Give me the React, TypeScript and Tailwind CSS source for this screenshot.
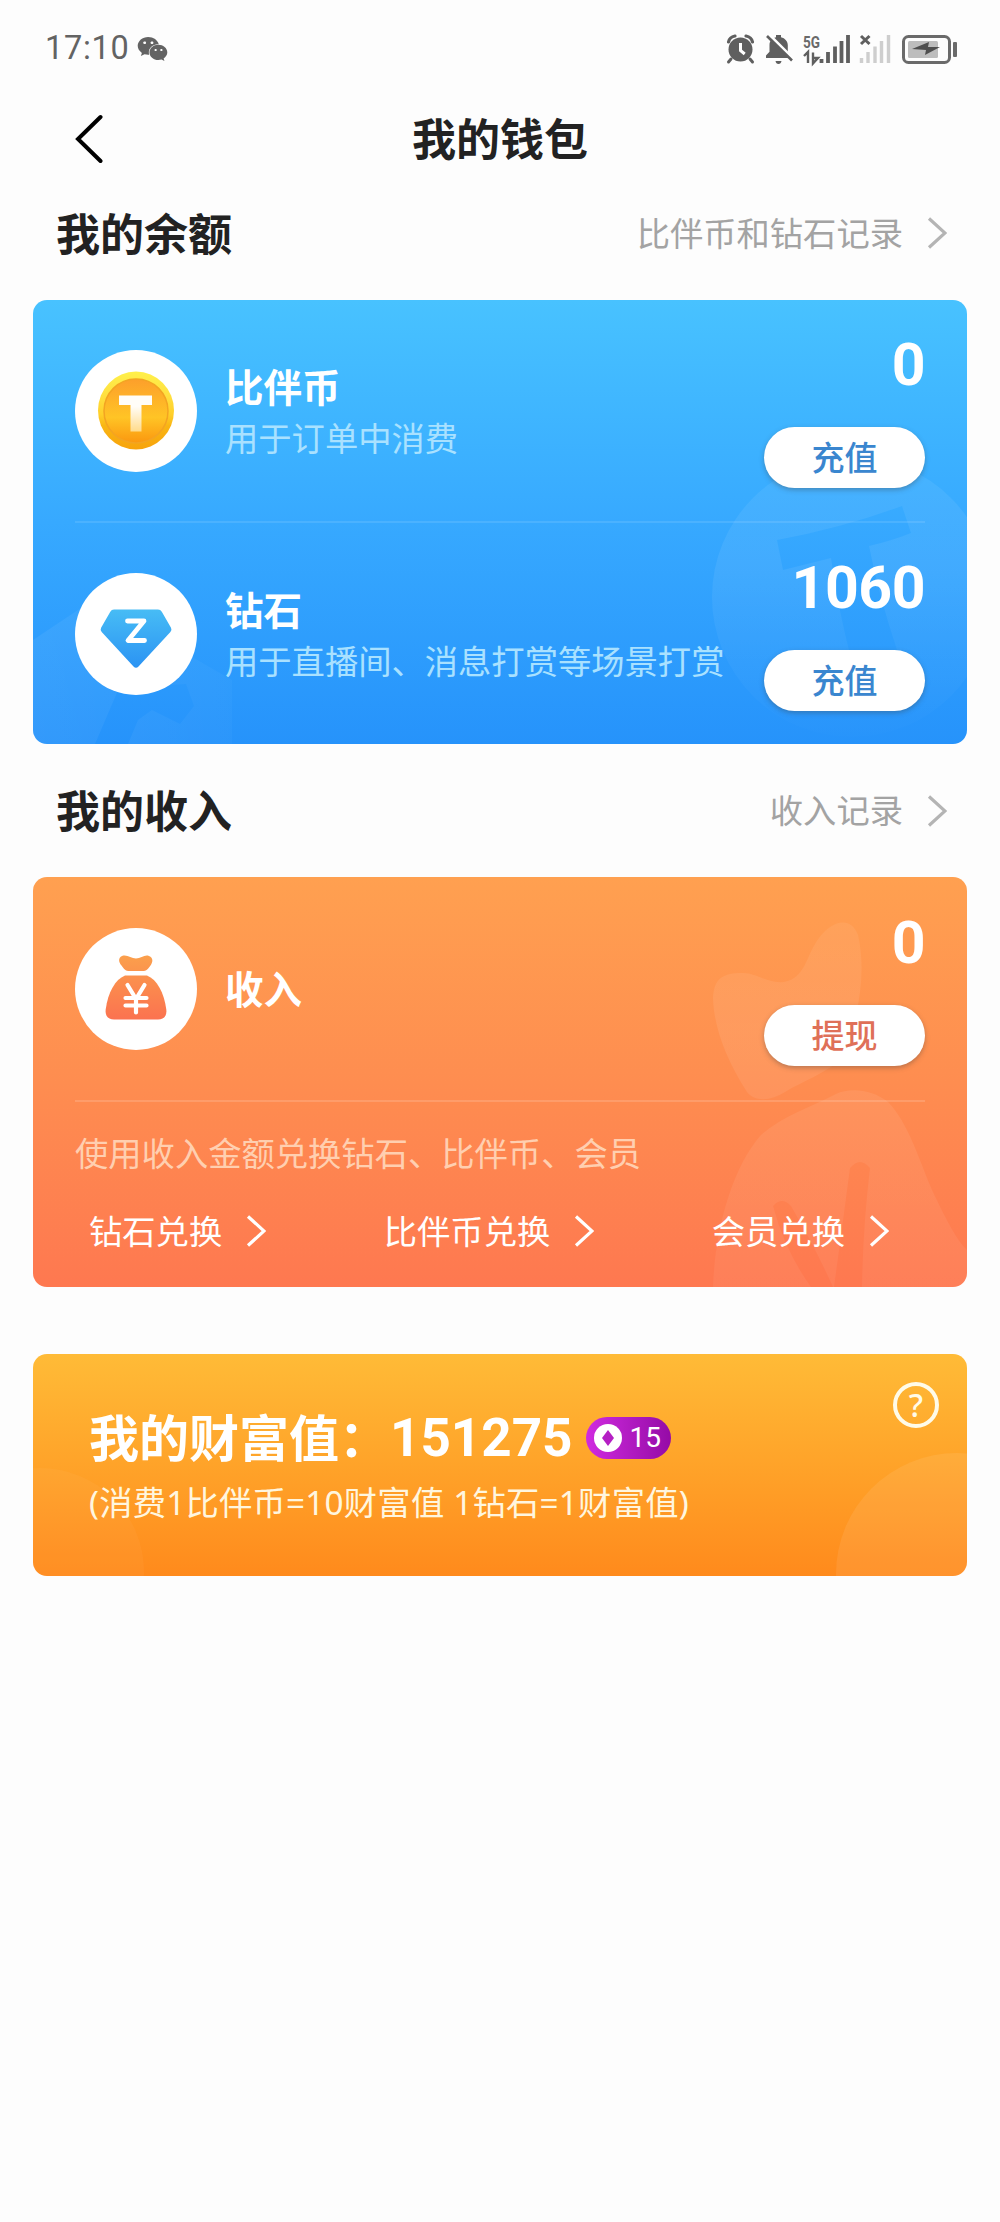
import React from "react";
import { FaWeixin } from "react-icons/fa";

function Chevron({ className }: { className: string }) {
  return (
    <svg viewBox="0 0 20 32" className={`h-8 w-5 ${className}`} fill="none" stroke="currentColor" strokeWidth="3.2">
      <path d="M2 1.500 18 16 2 30.500" />
    </svg>
  );
}

function StatusBar() {
  return (
    <div className="flex h-[97px] items-center justify-between pl-[45px] pr-[42px] text-[#636363]">
      <div className="flex items-center gap-[8px]">
        <span className="font-['Roboto',sans-serif] text-[32.500px] leading-none tracking-[0.7px]">17:10</span>
        <FaWeixin className="h-[28px] w-[31px]" />
      </div>
      <svg width="232" height="36" viewBox="726 30 232 36" className="block overflow-visible">
        {/* alarm */}
        <g fill="#5f5f5f">
          <circle cx="740.5" cy="48.500" r="12" />
          <path d="M728.500 41q1-5 6.500-6" fill="none" stroke="#5f5f5f" strokeWidth="3.200" strokeLinecap="round" />
          <path d="M752.500 41q-1-5-6.500-6" fill="none" stroke="#5f5f5f" strokeWidth="3.200" strokeLinecap="round" />
          <path d="m731 58-2.500 3M750 58l2.500 3" stroke="#5f5f5f" strokeWidth="3" strokeLinecap="round" />
          <path d="M740.500 42v7.500l4.200 3.500" fill="none" stroke="#fff" strokeWidth="3" />
        </g>
        {/* muted bell */}
        <path
          d="M766 57v-2.500l3.500-3.800V44c0-4 2.500-6.800 6.500-7.800V34h5v2.200c4 1 6.800 4 6.800 8v6.500L791 54.500V57ZM775.500 60h6q-.5 3-3 3t-3-3Z"
          fill="#5f5f5f"
        />
        <path d="m769 33.500 25 25" stroke="#fff" strokeWidth="3" />
        <path d="m767 35 25 24.500" stroke="#5f5f5f" strokeWidth="2.600" />
        {/* mobile signal */}
        <text x="803" y="46.500" fontSize="17" fontWeight="700" fontFamily="Roboto" textLength="17" lengthAdjust="spacingAndGlyphs" fill="#6a6a6a">
          5G
        </text>
        <path d="M804 55l4-4v11M813 51.500v11l5-5.500h-5" fill="none" stroke="#5f5f5f" strokeWidth="2.400" />
        <path d="M821.500 62v-4M828 62V51M835 62V45.500M841.500 62V40M848 62V34" stroke="#5f5f5f" strokeWidth="3.800" />
        {/* empty sim */}
        <path d="m861 35 8.500 8M869.500 35l-8.500 8" stroke="#5f5f5f" strokeWidth="3" />
        <path d="M861.500 62v-5M868 62V51M875 62V45.500M881.500 62V40M888.500 62V34" stroke="#cecece" strokeWidth="3.400" />
        {/* battery */}
        <rect x="903.500" y="35.500" width="46" height="26" rx="5" fill="none" stroke="#6a6a6a" strokeWidth="3" />
        <rect x="908" y="40" width="30" height="17" rx="1.500" fill="#bdbdbd" />
        <path d="m912 48 17-7-1 5h12l-15 8 1-5Z" fill="#4f4f4f" />
        <rect x="953" y="41" width="4" height="15" rx="1" fill="#6a6a6a" />
      </svg>
    </div>
  );
}

function SectionHead({ title, link, className }: { title: string; link: string; className: string }) {
  return (
    <div className={`flex items-center justify-between pl-[56px] pr-[53px] ${className}`}>
      <h2 className="text-[44px] font-bold leading-none text-[#222]">{title}</h2>
      <div className="flex items-center gap-[24px] text-[#a3a3a3]">
        <span className="text-[33.300px] leading-none">{link}</span>
        <Chevron className="text-[#b4b4b4]" />
      </div>
    </div>
  );
}

function IconDisc({ children }: { children: React.ReactNode }) {
  return (
    <div className="h-[122px] w-[122px] shrink-0 rounded-full bg-white">
      <svg viewBox="0 0 122 122" className="h-full w-full">
        {children}
      </svg>
    </div>
  );
}

function CoinIcon() {
  return (
    <IconDisc>
      <defs>
        <linearGradient id="coinRim" x1="0" y1="0" x2="0" y2="1">
          <stop offset="0" stopColor="#fff04a" />
          <stop offset=".3" stopColor="#ffe040" />
          <stop offset=".55" stopColor="#ffcf2a" />
          <stop offset=".7" stopColor="#f9b514" />
          <stop offset="1" stopColor="#f7a30c" />
        </linearGradient>
        <linearGradient id="coinFace" x1="0" y1="0" x2="0" y2="1">
          <stop offset="0" stopColor="#fd9f2b" />
          <stop offset=".6" stopColor="#ffc425" />
          <stop offset="1" stopColor="#fb970f" />
        </linearGradient>
        <linearGradient id="coinT" x1="0" y1="0" x2="0" y2="1">
          <stop offset=".3" stopColor="#fffdf8" />
          <stop offset="1" stopColor="#ffdb8a" />
        </linearGradient>
      </defs>
      <ellipse cx="61" cy="60.500" rx="38" ry="39" fill="url(#coinRim)" />
      <circle cx="61" cy="61" r="32" fill="url(#coinFace)" stroke="#f3a422" strokeWidth="1.500" />
      <path d="M44 45.500h33v9.500H66.500v26.500h-11V55H44Z" fill="url(#coinT)" />
    </IconDisc>
  );
}

function DiamondIcon() {
  return (
    <IconDisc>
      <defs>
        <linearGradient id="gem" x1="0" y1="0" x2="0" y2="1">
          <stop offset="0" stopColor="#47bcf5" />
          <stop offset="1" stopColor="#2b93f3" />
        </linearGradient>
      </defs>
      <path
        d="M39 36.500h44q2.500 0 3.800 2.200l9.200 16q1.200 2.200-.6 4.300L63.500 93.500q-2.500 2.500-5 0L26.700 59q-1.800-2.100-.6-4.300l9.200-16q1.200-2.200 3.700-2.200Z"
        fill="url(#gem)"
      />
      <path d="M52.500 48H69L53 67.500h16.500" fill="none" stroke="#fff" strokeWidth="4.800" strokeLinecap="round" strokeLinejoin="round" />
    </IconDisc>
  );
}

function BagIcon() {
  return (
    <IconDisc>
      <defs>
        <linearGradient id="bag" x1="0" y1="27" x2="0" y2="92" gradientUnits="userSpaceOnUse">
          <stop offset="0" stopColor="#fba04c" />
          <stop offset="1" stopColor="#fb7250" />
        </linearGradient>
      </defs>
      <path
        d="M47 28c5-2 9 2.500 14 2.500s9-4.500 13-2.500c4.500 2 4 6 1.500 9.500C73 41 72 43 67 43H55c-5 0-6-2-8.500-5.500C43.500 34 43 30 47 28Z"
        fill="url(#bag)"
      />
      <path d="M50 47.500h22c10 4 17 17 19.300 34 .7 6-2 10-8.300 10H39c-6.300 0-9-4-8.300-10C33 64.500 40 51.500 50 47.500Z" fill="url(#bag)" />
      <path d="m52.500 57 8.500 14 8.500-14M61 71v13.500M50.500 70h21M50.500 77.500h21" fill="none" stroke="#fff" strokeWidth="4.200" strokeLinecap="round" />
    </IconDisc>
  );
}

function PillButton({ label, className }: { label: string; className: string }) {
  return (
    <button
      className={`flex h-[61px] w-[161px] items-center justify-center rounded-full bg-white text-[33px] font-medium leading-none shadow-[0_2px_5px_rgba(60,60,60,0.35)] ${className}`}
    >
      {label}
    </button>
  );
}

type RowProps = {
  icon: React.ReactNode;
  name: string;
  note?: string;
  amount: string;
  action: string;
  actionClass: string;
};

function AssetRow({ icon, name, note, amount, action, actionClass }: RowProps) {
  return (
    <div className="flex h-[221px] px-[42px]">
      <div className="mt-[50px] flex h-[122px] flex-1 items-center">
        {icon}
        <div className="ml-[28px] flex flex-col gap-[15px] whitespace-nowrap">
          <span className="text-[38.500px] font-bold leading-[38px]">{name}</span>
          {note && <span className="text-[33.300px] leading-[34px] text-[#a9e1ff]">{note}</span>}
        </div>
      </div>
      <div className="flex flex-col items-end pt-[36px]">
        <span className="font-['Roboto',sans-serif] text-[59px] font-bold leading-[58px] tracking-[-0.5px]">{amount}</span>
        <PillButton label={action} className={`mt-[33px] ${actionClass}`} />
      </div>
    </div>
  );
}

function BalanceCard() {
  return (
    <section className="relative mx-[33px] h-[444px] overflow-hidden rounded-[14px] bg-linear-to-b from-[#48c2ff] via-[#37a9ff] to-[#2693fb] text-white">
      <svg viewBox="33 300 934 444" className="absolute inset-0 h-full w-full">
        <defs>
          <linearGradient id="coinFade" x1="0" y1="457" x2="0" y2="737" gradientUnits="userSpaceOnUse">
            <stop offset="0" stopColor="#fff" stopOpacity=".06" />
            <stop offset=".4" stopColor="#fff" stopOpacity=".07" />
            <stop offset="1" stopColor="#fff" stopOpacity=".005" />
          </linearGradient>
          <linearGradient id="gemFade" x1="33" y1="0" x2="232" y2="0" gradientUnits="userSpaceOnUse">
            <stop offset="0" stopColor="#fff" stopOpacity=".06" />
            <stop offset="1" stopColor="#fff" stopOpacity=".025" />
          </linearGradient>
        </defs>
        <path
          fillRule="evenodd"
          fill="url(#coinFade)"
          d="M712 597a140 140 0 1 0 280 0 140 140 0 1 0-280 0ZM777 540q65-12 125-34l9 27q-20 8-42 13 10 50 28 104l-46 8q-12-45-20-100l-48 12Z"
        />
        <path fillRule="evenodd" fill="url(#gemFade)" d="M33 640l60-40 139 80v64H33ZM95 744l24-56 67-4 8 22-14 18-28-14-14 10-10 24Z" />
      </svg>
      <div className="relative">
        <AssetRow icon={<CoinIcon />} name="比伴币" note="用于订单中消费" amount="0" action="充值" actionClass="text-[#3a86cf]" />
        <div className="mx-[42px] h-[2px] bg-white/10" />
        <AssetRow
          icon={<DiamondIcon />}
          name="钻石"
          note="用于直播间、消息打赏等场景打赏"
          amount="1060"
          action="充值"
          actionClass="text-[#3a86cf]"
        />
      </div>
    </section>
  );
}

function IncomeCard() {
  return (
    <section className="relative mx-[33px] h-[410px] overflow-hidden rounded-[14px] bg-linear-to-b from-[#ffa050] via-[#fe8d50] to-[#fe7850] text-white">
      <svg viewBox="33 877 934 410" className="absolute inset-0 h-full w-full">
        <defs>
          <linearGradient id="pouchFade" x1="0" y1="920" x2="0" y2="1287" gradientUnits="userSpaceOnUse">
            <stop offset="0" stopColor="#fff" stopOpacity=".06" />
            <stop offset=".3" stopColor="#fff" stopOpacity=".08" />
            <stop offset="1" stopColor="#fff" stopOpacity=".05" />
          </linearGradient>
        </defs>
        <g fill="url(#pouchFade)">
          <path d="M713 998c1-20 10-25 30-25 14 0 24 11 41 9 22-4 21-25 35-44 12-17 32-23 39-3 8 35 2 75-13 120-14 16-40 25-60 37-14 9-30 10-38 0-22-35-33-65-34-94Z" />
          <path
            fillRule="evenodd"
            d="M713 1287c2-55 18-118 48-152 20-18 50-28 75-41 15-7 37-4 52 8 20 20 32 60 44 88 14 30 26 52 35 60v37ZM850 1168q-8 60-16 119h28q1-60 8-119-10-12-20 0ZM773 1206q12 45 38 81h22q-18-40-42-81-9-10-18 0Z"
          />
        </g>
      </svg>
      <div className="relative pt-px">
        <AssetRow icon={<BagIcon />} name="收入" amount="0" action="提现" actionClass="text-[#df7058]" />
        <div className="mx-[42px] mt-px h-[2px] bg-white/15" />
        <p className="ml-[42px] mt-[34px] text-[33.300px] leading-[34px] text-[#ffcfb0]">使用收入金额兑换钻石、比伴币、会员</p>
        <div className="mt-[45px] flex items-center justify-between pl-[56px] pr-[78px] text-[33.300px] leading-[32px]">
          {["钻石兑换", "比伴币兑换", "会员兑换"].map((label) => (
            <span key={label} className="flex items-center gap-[24px]">
              {label}
              <Chevron className="text-white" />
            </span>
          ))}
        </div>
      </div>
    </section>
  );
}

function WealthCard() {
  return (
    <section className="relative mx-[33px] mt-[67px] h-[222px] overflow-hidden rounded-[14px] bg-linear-to-b from-[#ffbb37] via-[#ffa329] to-[#ff8a1c] text-white">
      <svg viewBox="33 1354 934 222" className="absolute inset-0 h-full w-full">
        <circle cx="957" cy="1574" r="121" fill="#fff" fillOpacity=".08" />
        <circle cx="40" cy="1572" r="104" fill="#fff" fillOpacity=".035" />
      </svg>
      <div className="relative pl-[56px] pt-[57px]">
        <div className="flex h-[54px] items-center whitespace-nowrap font-bold leading-[54px]">
          <span className="text-[50px]">我的财富值：</span>
          <span className="ml-px font-['Roboto',sans-serif] text-[53px]">151275</span>
          <span className="ml-[14px] flex h-[42px] w-[85px] items-center rounded-full bg-linear-to-r from-[#d02ae0] to-[#950aa6] pl-[8px] font-['Roboto',sans-serif] text-[28px] font-normal leading-none">
            <svg viewBox="0 0 28 28" className="mr-[7px] h-7 w-7">
              <circle cx="14" cy="14" r="14" fill="#fff" />
              <path d="m14 6 6 8-6 8-6-8Z" fill="#b51fc4" />
            </svg>
            15
          </span>
        </div>
        <p className="mt-[20px] whitespace-nowrap text-[33.300px] leading-[34px] tracking-[0.22px] text-[#fff6df]">
          (消费1比伴币=10财富值 1钻石=1财富值)
        </p>
      </div>
      <div className="absolute right-[28px] top-[28px] flex h-[46px] w-[46px] items-center justify-center rounded-full border-4 border-[#fffbe8] text-[32px] font-medium leading-none text-[#fffbe8]">
        ?
      </div>
    </section>
  );
}

export default function App() {
  return (
    <main className="h-[2222px] w-[1000px] overflow-hidden bg-[#fdfdfd] font-['Noto_Sans','Noto_Sans_CJK_SC',sans-serif]">
      <StatusBar />
      <header className="grid h-[84px] grid-cols-[200px_1fr_200px] items-center">
        <svg viewBox="0 0 28 50" className="ml-[75px] h-[50px] w-[28px]" fill="none" stroke="#000" strokeWidth="4" strokeLinecap="round">
          <path d="M25.500 3 3 25l22.500 22" />
        </svg>
        <h1 className="text-center text-[44px] font-bold leading-none text-[#222]">我的钱包</h1>
      </header>
      <SectionHead title="我的余额" link="比伴币和钻石记录" className="mb-[14px] h-[105px]" />
      <BalanceCard />
      <SectionHead title="我的收入" link="收入记录" className="h-[133px] pt-px" />
      <IncomeCard />
      <WealthCard />
    </main>
  );
}
